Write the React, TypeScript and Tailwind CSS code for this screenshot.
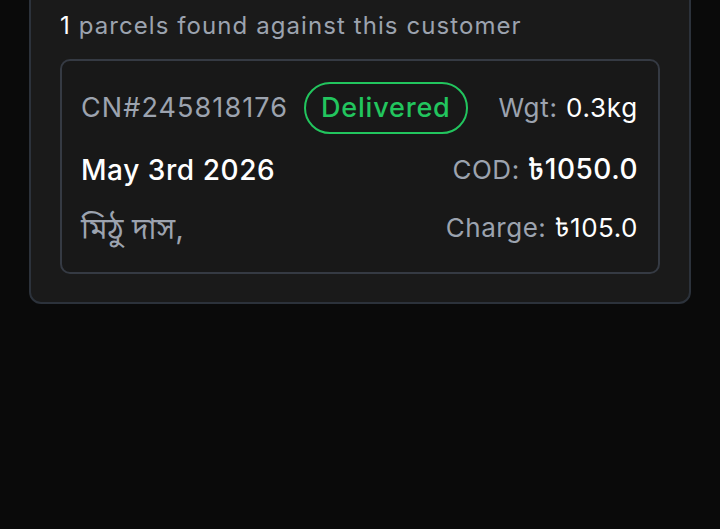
import React from 'react';

interface Parcel {
    cn: string;
    status: string;
    weight: string;
    date: string;
    name: string;
    cod: string;
    charge: string;
}

const parcels: Parcel[] = [
    {
        cn: '245818176',
        status: 'Delivered',
        weight: '0.3kg',
        date: 'May 3rd 2026',
        name: 'মিঠু দাস,',
        cod: '৳1050.0',
        charge: '৳105.0',
    },
];

export default function App() {
    return (
        <div
            className="min-h-[529px] w-full bg-[#0a0a0a] overflow-hidden"
            style={{ fontFamily: 'Inter, "Noto Sans", "Noto Sans Bengali", sans-serif' }}
        >
            <div className="mx-[29px] -mt-[20px] rounded-[12px] border-2 border-[#2c323b] bg-[#1a1a1a] px-[29px] pt-[28px] pb-[28px]">
                <p className="text-[24px] leading-[32px] tracking-[0.045em] text-[#9ca3af]">
                    <span className="text-white">{parcels.length}</span> parcels found against this customer
                </p>

                <ul className="mt-[17px] flex flex-col gap-4">
                    {parcels.map((p) => (
                        <li
                            key={p.cn}
                            className="rounded-[10px] border-2 border-[#353a43] bg-[#181818] pl-[19px] pr-[20px] pt-[21px] pb-[26px]"
                        >
                            <div className="flex items-center justify-between">
                                <div className="flex items-center gap-[16px]">
                                    <span className="text-[27px] leading-[34px] tracking-[0.04em] text-[#9ca3af]">CN#{p.cn}</span>
                                    <span className="flex h-[52px] items-center rounded-full border-2 border-[#22c55e] px-[15px] text-[27px] font-medium tracking-[0.03em] text-[#22c55e]">
                                        {p.status}
                                    </span>
                                </div>
                                <span className="text-[26px] leading-[34px] tracking-[0.03em] text-[#9ca3af]">
                                    Wgt: <span className="text-white">{p.weight}</span>
                                </span>
                            </div>

                            <div className="mt-[17px] flex items-center justify-between">
                                <span className="text-[28px] leading-[36px] font-medium tracking-[0.02em] text-white">{p.date}</span>
                                <span className="text-[26px] leading-[36px] tracking-[0.02em] text-[#9ca3af]">
                                    COD: <span className="text-[28px] font-medium text-white">{p.cod}</span>
                                </span>
                            </div>

                            <div className="mt-[22px] flex items-center justify-between">
                                <span className="text-[30px] leading-[36px] text-[#9ca3af]">{p.name}</span>
                                <span className="text-[26px] leading-[36px] tracking-[0.02em] text-[#9ca3af]">
                                    Charge: <span className="text-white">{p.charge}</span>
                                </span>
                            </div>
                        </li>
                    ))}
                </ul>
            </div>
        </div>
    );
}
